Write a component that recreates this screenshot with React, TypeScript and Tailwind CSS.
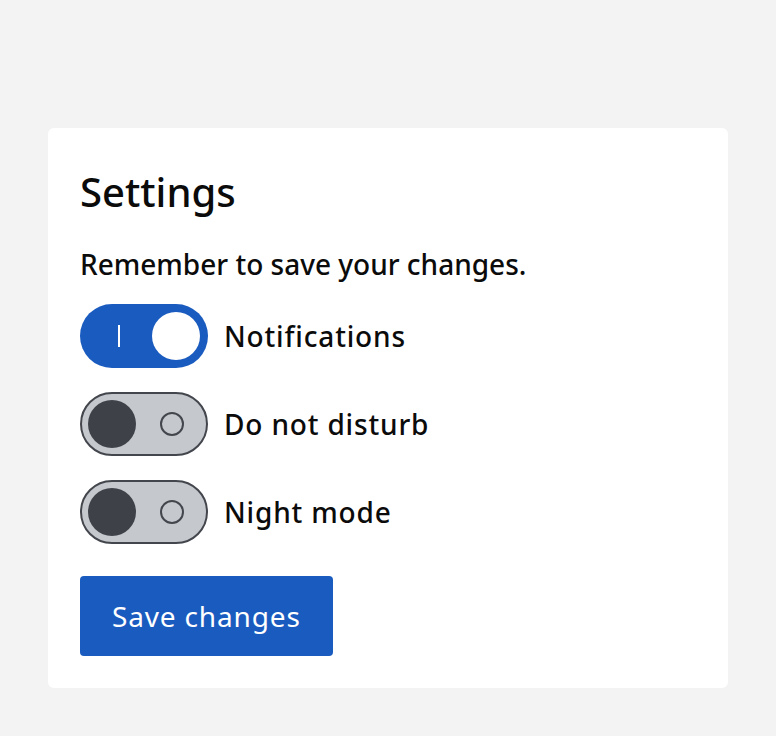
import { useState } from "react";

type Setting = {
  id: string;
  label: string;
  on: boolean;
};

const initialSettings: Setting[] = [
  { id: "notifications", label: "Notifications", on: true },
  { id: "dnd", label: "Do not disturb", on: false },
  { id: "night", label: "Night mode", on: false },
];

function Toggle({ on, onClick }: { on: boolean; onClick: () => void }) {
  if (on) {
    return (
      <button
        type="button"
        role="switch"
        aria-checked="true"
        onClick={onClick}
        className="flex h-16 w-32 shrink-0 items-center rounded-full bg-[#1a5bbf] pl-[38px] pr-2"
      >
        <span className="h-[22px] w-[2px] bg-white" />
        <span className="ml-auto h-12 w-12 rounded-full bg-white" />
      </button>
    );
  }

  return (
    <button
      type="button"
      role="switch"
      aria-checked="false"
      onClick={onClick}
      className="flex h-16 w-32 shrink-0 items-center rounded-full border-2 border-[#43464c] bg-[#c5c8cd] pl-[6px] pr-[22px]"
    >
      <span className="h-12 w-12 rounded-full bg-[#3e4248]" />
      <span className="ml-auto h-[24px] w-[24px] rounded-full border-2 border-[#43464c]" />
    </button>
  );
}

export default function App() {
  const [settings, setSettings] = useState<Setting[]>(initialSettings);

  function toggle(id: string) {
    setSettings((prev) =>
      prev.map((s) => (s.id === id ? { ...s, on: !s.on } : s))
    );
  }

  return (
    <div className="min-h-screen bg-[#f3f3f3] px-12 pt-32 pb-12 font-['Noto_Sans',sans-serif] text-[#0b0b0b]">
      <div className="rounded-[6px] bg-white p-8">
        <h1 className="text-[40px] leading-[64px] font-medium">Settings</h1>
        <p className="mt-5 text-[28px] leading-[40px] font-medium">
          Remember to save your changes.
        </p>

        <div className="mt-5 flex flex-col gap-6">
          {settings.map((s) => (
            <label key={s.id} className="flex items-center gap-4">
              <Toggle on={s.on} onClick={() => toggle(s.id)} />
              <span className="text-[28px] leading-[40px] font-medium tracking-[0.03em]">
                {s.label}
              </span>
            </label>
          ))}
        </div>

        <button
          type="button"
          className="mt-8 h-20 rounded-[4px] bg-[#1a5bbf] px-8 text-[28px] font-normal tracking-[0.03em] text-white"
        >
          Save changes
        </button>
      </div>
    </div>
  );
}
